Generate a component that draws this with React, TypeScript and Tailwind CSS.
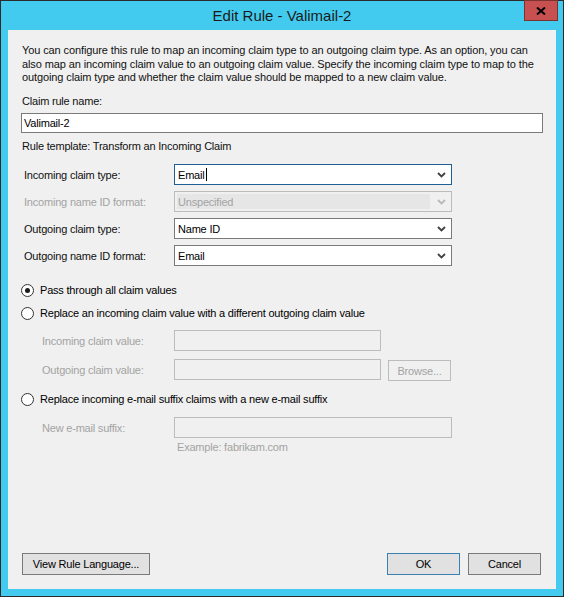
const font = { fontFamily: '"Liberation Sans", Arial, sans-serif' }

function Chevron({ disabled }: { disabled?: boolean }) {
  return (
    <svg width="9" height="6" viewBox="0 0 9 6" className="shrink-0">
      <path
        d="M1 1 L4.5 4.5 L8 1"
        fill="none"
        stroke={disabled ? '#b8b8b8' : '#404040'}
        strokeWidth="1.8"
      />
    </svg>
  )
}

function Select({ value, focused, disabled }: { value: string; focused?: boolean; disabled?: boolean }) {
  const border = focused ? 'border-[#1f5f96]' : disabled ? 'border-[#bcbcbc]' : 'border-[#7a7a7a]'
  return (
    <div className={`relative w-[278px] h-[21px] border ${border} flex items-center ${disabled ? 'bg-[#f0f0f0]' : 'bg-white'}`}>
      {disabled ? (
        <div className="ml-[2px] w-[253px] h-[15px] bg-[#e6e6e6] flex items-center pl-px text-[#a3a3a3]">{value}</div>
      ) : (
        <div className="flex-1 flex items-center pl-[3px] text-black">
          {value}
          {focused && <span className="inline-block w-px h-[13px] bg-black ml-[1px]" />}
        </div>
      )}
      <div className="absolute right-[5px] top-[7px] flex">
        <Chevron disabled={disabled} />
      </div>
    </div>
  )
}

function Radio({ checked, label }: { checked?: boolean; label: string }) {
  return (
    <div className="h-[16px] flex items-center">
      <div className="w-[13px] h-[13px] rounded-full border border-[#333333] bg-white flex items-center justify-center">
        {checked && <div className="w-[5px] h-[5px] rounded-full bg-[#1a1a1a]" />}
      </div>
      <span className="ml-[6px] text-black">{label}</span>
    </div>
  )
}

function Button({ children, className = '' }: { children: React.ReactNode; className?: string }) {
  return (
    <div className={`h-[22px] border bg-[#e1e1e1] flex items-center justify-center text-black ${className}`}>
      {children}
    </div>
  )
}

export default function App() {
  return (
    <div
      className="w-[564px] h-[597px] bg-[#42cbef] border border-[#2b2b2b] flex flex-col text-[11px] leading-[14px] tracking-[-0.2px] whitespace-nowrap"
      style={font}
    >
      <div className="relative h-[29px] flex items-center justify-center">
        <span className="text-[15px] tracking-normal text-[#1b1b1b]">Edit Rule - Valimail-2</span>
        <div className="absolute -top-px right-[5px] w-[34px] h-[21px] bg-[#c75050] border border-[#7b3330] flex items-center justify-center">
          <svg width="10" height="8" viewBox="0 0 10 8">
            <path d="M1 0.5 L9 7.5 M9 0.5 L1 7.5" stroke="#000" strokeWidth="2" />
          </svg>
        </div>
      </div>

      <div className="flex-1 mx-[7px] mb-[7px] bg-[#f0f0f0] flex flex-col pl-[13px] text-[#111111]">
        <p className="mt-[14px] h-[50px] leading-[13.5px] pl-[1px] tracking-[-0.11px]">
          You can configure this rule to map an incoming claim type to an outgoing claim type. As an option, you can
          <br />
          also map an incoming claim value to an outgoing claim value. Specify the incoming claim type to map to the
          <br />
          outgoing claim type and whether the claim value should be mapped to a new claim value.
        </p>
        <div className="h-[14px] pl-[1px]">Claim rule name:</div>
        <div className="mt-[5px] w-[522px] h-[20px] border border-[#7a7a7a] bg-white flex items-center pl-[2px] text-black">
          Valimail-2
        </div>
        <div className="mt-[6px] h-[14px] pl-[1px]">Rule template: Transform an Incoming Claim</div>

        <div className="mt-[11px] flex flex-col gap-[6px]">
          <div className="flex items-center">
            <span className="w-[153px] pl-[3px]">Incoming claim type:</span>
            <Select value="Email" focused />
          </div>
          <div className="flex items-center">
            <span className="w-[153px] pl-[3px] text-[#a3a3a3]">Incoming name ID format:</span>
            <Select value="Unspecified" disabled />
          </div>
          <div className="flex items-center">
            <span className="w-[153px] pl-[3px]">Outgoing claim type:</span>
            <Select value="Name ID" />
          </div>
          <div className="flex items-center">
            <span className="w-[153px] pl-[3px]">Outgoing name ID format:</span>
            <Select value="Email" />
          </div>
        </div>

        <div className="mt-[16px]">
          <Radio checked label="Pass through all claim values" />
        </div>
        <div className="mt-[7px]">
          <Radio label="Replace an incoming claim value with a different outgoing claim value" />
        </div>

        <div className="mt-[9px] flex items-center text-[#a3a3a3]">
          <span className="w-[153px] pl-[21px]">Incoming claim value:</span>
          <div className="w-[207px] h-[21px] border border-[#bcbcbc] bg-[#f0f0f0]" />
        </div>
        <div className="mt-[8px] flex items-start text-[#a3a3a3]">
          <span className="w-[153px] pl-[21px] h-[21px] flex items-center">Outgoing claim value:</span>
          <div className="w-[207px] h-[21px] border border-[#bcbcbc] bg-[#f0f0f0]" />
          <div className="ml-[7px] mt-[1px] w-[63px] h-[21px] border border-[#bcbcbc] bg-[#f0f0f0] flex items-center justify-center">
            Browse...
          </div>
        </div>

        <div className="mt-[10px]">
          <Radio label="Replace incoming e-mail suffix claims with a new e-mail suffix" />
        </div>
        <div className="mt-[10px] flex items-center text-[#a3a3a3]">
          <span className="w-[153px] pl-[21px]">New e-mail suffix:</span>
          <div className="w-[278px] h-[21px] border border-[#bcbcbc] bg-[#f0f0f0]" />
        </div>
        <div className="mt-[2px] h-[14px] pl-[156px] text-[#a3a3a3]">Example: fabrikam.com</div>

        <div className="mt-auto mb-[14px] flex items-center pr-[15px]">
          <Button className="w-[128px] ml-px border-[#7a7a7a]">View Rule Language...</Button>
          <div className="flex-1" />
          <Button className="w-[73px] border-[#3c7fb1]">OK</Button>
          <Button className="w-[73px] ml-[8px] border-[#7a7a7a]">Cancel</Button>
        </div>
      </div>
    </div>
  )
}
